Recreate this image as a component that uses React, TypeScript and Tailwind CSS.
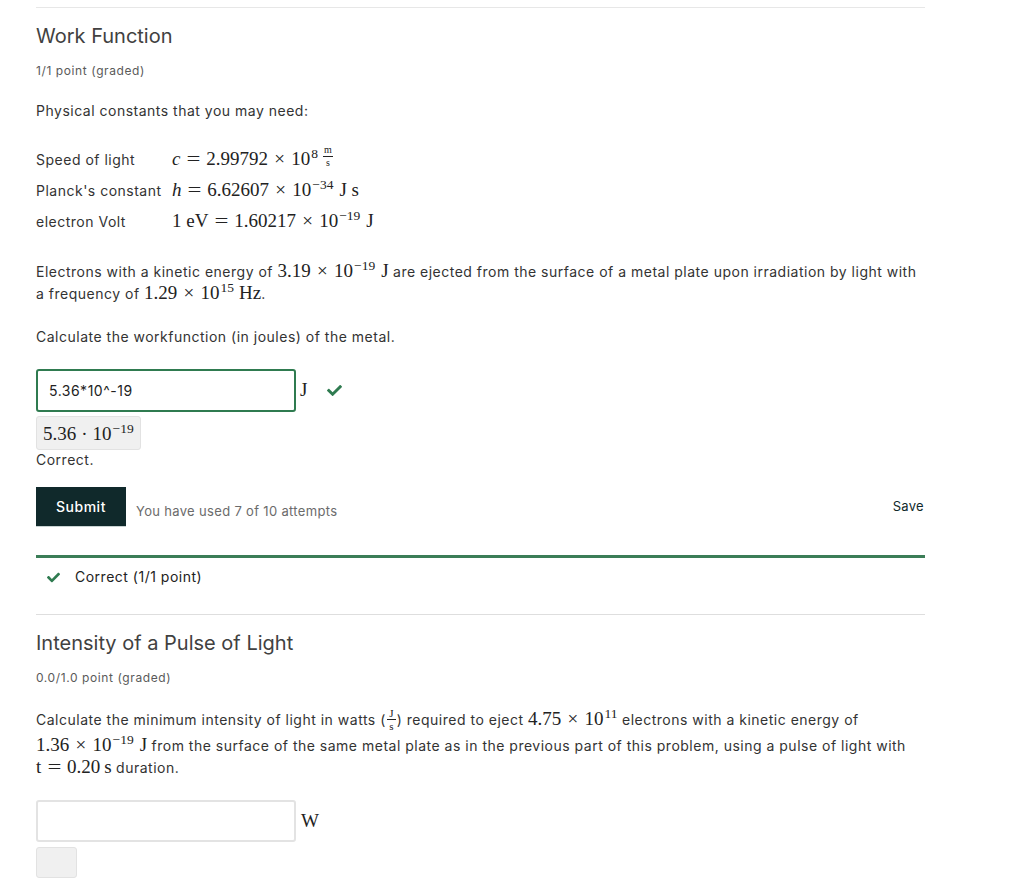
import React from "react";

const serif = "font-['Liberation_Serif','Times_New_Roman',serif]";

function Eq() {
  return <span className="mx-[7.5px] inline-block scale-x-[1.3]">=</span>;
}
function Times() {
  return <span className="mx-[6.3px]">×</span>;
}
function Sup({ children }: { children: React.ReactNode }) {
  return <sup className="text-[13.5px] ml-[1px] tracking-normal">{children}</sup>;
}
function M({ children }: { children: React.ReactNode }) {
  return <span className={`${serif} text-[19px] leading-none tracking-normal text-[#222]`}>{children}</span>;
}
function Frac({ n, d, w, size, bottom }: { n: string; d: string; w: string; size: string; bottom: string }) {
  return (
    <span className={`relative inline-block h-[1px] ${w}`}>
      <span className={`absolute left-0 right-0 ${bottom} flex flex-col items-center ${size}`}>
        <span className="w-full border-b border-[#222] text-center leading-[10px] pb-[1px]">{n}</span>
        <span className="leading-[10px] pt-[1px]">{d}</span>
      </span>
    </span>
  );
}
function Check({ className }: { className?: string }) {
  return (
    <svg viewBox="0 0 512 512" className={className} fill="currentColor">
      <path d="M173.898 439.404l-166.4-166.4c-9.997-9.997-9.997-26.206 0-36.204l36.203-36.204c9.997-9.998 26.207-9.998 36.204 0L192 312.69 432.095 72.596c9.997-9.997 26.207-9.997 36.204 0l36.203 36.204c9.997 9.997 9.997 26.206 0 36.204l-294.4 294.401c-9.998 9.997-26.207 9.997-36.204-.001z" />
    </svg>
  );
}

export default function App() {
  return (
    <div className="min-h-[888px] bg-white font-['Inter','Noto_Sans',sans-serif] text-[14px] tracking-[0.5px] text-[#333]">
      <div className="ml-[36px] w-[889px] pt-[7px]">
        <div className="border-t border-[#e7e7e7]" />

        {/* Problem 1 */}
        <h2 className="mt-[14px] text-[20px] leading-[28px] tracking-normal text-[#414141] font-normal">Work Function</h2>
        <div className="mt-[12px] text-[12px] leading-[18px] tracking-[0.6px] text-[#5a5a5a]">1/1 point (graded)</div>
        <p className="mt-[21px] leading-[20px]">Physical constants that you may need:</p>

        <div className="mt-[23px]">
          <div className="h-[31px] whitespace-nowrap leading-[31px]">
            <span className="inline-block w-[136px]">Speed of light</span>
            <M>
              <i>c</i>
              <Eq />
              2.99792
              <Times />
              10<Sup>8</Sup>
              <span className="ml-[5px]" />
              <Frac n="m" d="s" w="w-[10px]" size="text-[10px]" bottom="bottom-[-3px]" />
            </M>
          </div>
          <div className="h-[31px] whitespace-nowrap leading-[31px]">
            <span className="inline-block w-[136px]">Planck's constant</span>
            <M>
              <i>h</i>
              <Eq />
              6.62607
              <Times />
              10<Sup>−34</Sup>
              <span className="ml-[6px]">J s</span>
            </M>
          </div>
          <div className="h-[31px] whitespace-nowrap leading-[31px]">
            <span className="inline-block w-[136px]">electron Volt</span>
            <M>
              1 eV
              <Eq />
              1.60217
              <Times />
              10<Sup>−19</Sup>
              <span className="ml-[6px]">J</span>
            </M>
          </div>
        </div>

        <div className="mt-[24px] leading-[22px]">
          <div className="whitespace-nowrap">
            Electrons with a kinetic energy of{" "}
            <M>
              3.19
              <Times />
              10<Sup>−19</Sup>
              <span className="ml-[6px]">J</span>
            </M>{" "}
            are ejected from the surface of a metal plate upon irradiation by light with
          </div>
          <div className="whitespace-nowrap">
            a frequency of{" "}
            <M>
              1.29
              <Times />
              10<Sup>15</Sup>
              <span className="ml-[5px]">Hz</span>
            </M>
            .
          </div>
        </div>

        <p className="mt-[22px] leading-[20px]">Calculate the workfunction (in joules) of the metal.</p>

        <div className="mt-[22px] flex items-center">
          <div className="flex h-[43px] w-[260px] items-center rounded-[3px] border-2 border-[#2f7b50] px-[11px] text-[14px] text-[#222]">
            5.36*10^-19
          </div>
          <span className={`${serif} ml-[4px] text-[19px] text-[#222]`}>J</span>
          <Check className="ml-[19px] h-[15px] w-[15px] text-[#2f7b50]" />
        </div>
        <div className="mt-[4px] inline-flex h-[34px] items-center rounded-[3px] border border-[#e2e2e2] bg-[#f0f0f0] px-[6px]">
          <M>
            5.36
            <span className="mx-[5px]">·</span>
            10<Sup>−19</Sup>
          </M>
        </div>
        <div className="leading-[20px]">Correct.</div>

        <div className="mt-[17px] flex items-center">
          <button className="h-[39px] w-[90px] bg-[#10292b] text-[14px] font-medium text-white shadow-[0_1px_0_#c9d3d3]">
            Submit
          </button>
          <span className="ml-[10px] mt-[10px] text-[13px] tracking-[0.33px] text-[#6b6b6b]">You have used 7 of 10 attempts</span>
          <span className="ml-auto mr-[1px] text-[13px] tracking-[0.3px] text-[#10292b]">Save</span>
        </div>

        <div className="mt-[29px] border-t-[3px] border-[#3b7d57]" />
        <div className="mt-[9px] flex items-center leading-[20px]">
          <Check className="ml-[11px] h-[13px] w-[13px] text-[#2f7b50]" />
          <span className="ml-[15px] text-[#222]">Correct (1/1 point)</span>
        </div>
        <div className="mt-[27px] border-t border-[#dedede]" />

        {/* Problem 2 */}
        <h2 className="mt-[14px] text-[20px] leading-[28px] tracking-normal text-[#414141] font-normal">Intensity of a Pulse of Light</h2>
        <div className="mt-[12px] text-[12px] leading-[18px] tracking-[0.6px] text-[#5a5a5a]">0.0/1.0 point (graded)</div>

        <div className="mt-[22px] leading-[22px]">
          <div className="whitespace-nowrap">
            Calculate the minimum intensity of light in watts (
            <M>
              <Frac n="J" d="s" w="w-[9px] mx-[1px]" size="text-[11px]" bottom="bottom-[-6px]" />
            </M>
            ) required to eject{" "}
            <M>
              4.75
              <Times />
              10<Sup>11</Sup>
            </M>{" "}
            electrons with a kinetic energy of
          </div>
          <div className="mt-[4px] whitespace-nowrap">
            <M>
              1.36
              <Times />
              10<Sup>−19</Sup>
              <span className="ml-[6px]">J</span>
            </M>{" "}
            from the surface of the same metal plate as in the previous part of this problem, using a pulse of light with
          </div>
          <div className="whitespace-nowrap">
            <M>
              t<Eq />
              0.20
              <span className="ml-[4px]">s</span>
            </M>{" "}
            duration.
          </div>
        </div>

        <div className="mt-[21px] flex items-center">
          <div className="h-[42px] w-[260px] rounded-[3px] border-2 border-[#e3e3e3]" />
          <span className={`${serif} ml-[5px] text-[19px] text-[#222]`}>W</span>
        </div>
        <div className="mt-[5px] h-[31px] w-[41px] rounded-[3px] border border-[#e2e2e2] bg-[#f0f0f0]" />
      </div>
    </div>
  );
}
